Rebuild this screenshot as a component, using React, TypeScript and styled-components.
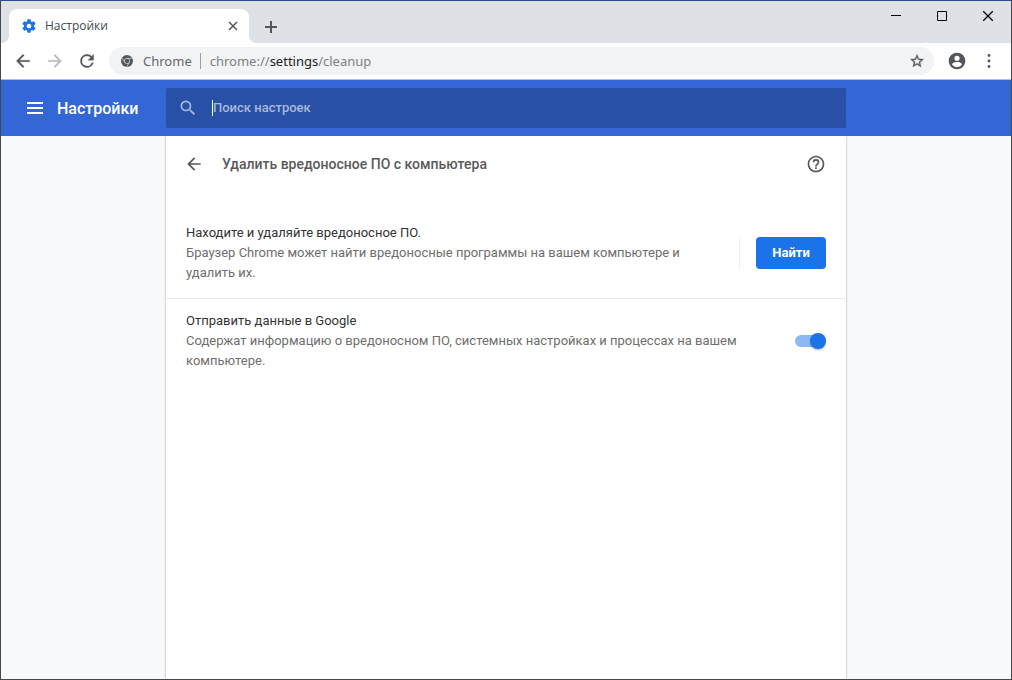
import React from "react";
import styled, { createGlobalStyle } from "styled-components";

const GlobalStyle = createGlobalStyle`
  *, *::before, *::after { box-sizing: border-box; }
  body { margin: 0; background: #f8f9fb; }
  button, input { font: inherit; margin: 0; }
`;

const Window = styled.div`
  min-height: 100vh;
  display: flex;
  flex-direction: column;
  border: 1px solid #46484d;
  border-top-color: #2c4a8c;
  font: 13px/20px Roboto, sans-serif;
  color: #333;
`;

const TabStrip = styled.div`
  display: flex;
  height: 42px;
  padding-left: 8px;
  background: #dee1e6;
  font: 12px/16px "Open Sans", sans-serif;
`;

const Tab = styled.div`
  position: relative;
  align-self: flex-end;
  display: flex;
  align-items: center;
  width: 240px;
  height: 34px;
  padding: 0 8px 0 12px;
  border-radius: 8px 8px 0 0;
  background: #fff;
  color: #45494d;

  &::before, &::after {
    content: "";
    position: absolute;
    bottom: 0;
    width: 8px;
    height: 8px;
  }
  &::before {
    right: 100%;
    background: radial-gradient(circle at 0 0, transparent 8px, #fff 8px);
  }
  &::after {
    left: 100%;
    background: radial-gradient(circle at 100% 0, transparent 8px, #fff 8px);
  }
`;

const TabTitle = styled.span`
  flex: 1;
  margin-left: 8px;
`;

const IconButton = styled.button<{ $w?: number; $h?: number; $color?: string }>`
  display: flex;
  flex: none;
  align-items: center;
  justify-content: center;
  width: ${(p) => p.$w ?? 32}px;
  height: ${(p) => p.$h ?? 32}px;
  padding: 0;
  border: 0;
  background: none;
  color: ${(p) => p.$color ?? "#54575b"};
`;

const NewTab = styled(IconButton)`
  align-self: flex-end;
  margin: 0 0 0 6px;
`;

const WindowButtons = styled.div`
  display: flex;
  margin-left: auto;
`;

const Toolbar = styled.div`
  display: flex;
  align-items: center;
  height: 37px;
  padding: 0 6px;
  border-bottom: 1px solid #b9bdc6;
  background: #fff;
`;

const Omnibox = styled.div`
  flex: 1;
  display: flex;
  align-items: center;
  height: 28px;
  margin: 0 7px 0 6px;
  padding: 0 1px 0 12px;
  border-radius: 14px;
  background: #f1f3f4;
  color: #64686c;
  font: 13px/20px "Noto Sans", sans-serif;
`;

const SiteLabel = styled.span`
  margin-left: 10px;
  padding-right: 8px;
`;

const Separator = styled.span`
  width: 1px;
  height: 16px;
  background: #9a9da1;
`;

const Address = styled.div`
  flex: 1;
  margin-left: 9px;
  color: #7c8186;
  outline: 0;

  b { font-weight: 400; color: #202124; }
`;

const Header = styled.header`
  display: grid;
  grid-template-columns: 1fr minmax(0, 680px) 1fr;
  align-items: center;
  height: 56px;
  background: #3367d6;
  color: #fff;
`;

const Brand = styled.div`
  display: flex;
  align-items: center;
  padding-left: 18px;
`;

const BrandName = styled.h1`
  margin: 0 0 0 6px;
  padding-top: 2px;
  font-size: 16px;
  line-height: 24px;
  font-weight: 500;
`;

const SearchBox = styled.label`
  display: flex;
  align-items: center;
  height: 40px;
  padding: 0 12px;
  border-radius: 2px;
  background: #2850a7;
  color: #a9b9dc;
`;

const Caret = styled.span`
  width: 1px;
  height: 16px;
  margin-left: 14px;
  background: #fff;
`;

const SearchInput = styled.input`
  flex: 1;
  min-width: 0;
  padding: 0;
  border: 0;
  outline: 0;
  background: none;
  color: #fff;
  font-weight: 500;

  &::placeholder { color: #a9b9dc; opacity: 1; }
`;

const Content = styled.main`
  flex: 1;
  display: grid;
  grid-template-columns: minmax(0, 680px);
  justify-content: center;
`;

const Card = styled.section`
  background: #fff;
  box-shadow: 0 0 2px rgba(60, 64, 67, 0.5);
  clip-path: inset(0 -4px);
`;

const CardHeader = styled.div`
  display: flex;
  align-items: center;
  height: 56px;
  padding: 0 14px 0 12px;
  margin-bottom: 18px;
`;

const CardTitle = styled.h2`
  flex: 1;
  margin: 0 0 0 12px;
  color: #5a5a5a;
  font-size: 14px;
  line-height: 20px;
  font-weight: 500;
`;

const Row = styled.div`
  display: flex;
  align-items: center;
  padding: 13px 20px 15px;

  & + & {
    padding-top: 12px;
    border-top: 1px solid #e8eaed;
  }
`;

const RowText = styled.div`
  flex: 1;
  margin-right: 52px;
`;

const RowTitle = styled.div`
  color: #333;
`;

const RowNote = styled.div`
  color: #6e6e6e;
`;

const ActionDivider = styled.span`
  width: 1px;
  height: 32px;
  margin-right: 16px;
  background: #eceef0;
`;

const PrimaryButton = styled.button`
  min-width: 70px;
  height: 32px;
  padding: 0 16px;
  border: 0;
  border-radius: 4px;
  background: #1a73e8;
  color: #fff;
  font-weight: 700;
`;

const Toggle = styled.input`
  appearance: none;
  display: grid;
  align-items: center;
  width: 31px;
  height: 16px;

  &::before, &::after {
    content: "";
    grid-area: 1 / 1;
  }
  &::before {
    width: 28px;
    height: 12px;
    border-radius: 6px;
    background: #8cb8f3;
  }
  &::after {
    justify-self: start;
    width: 16px;
    height: 16px;
    border-radius: 50%;
    background: #1a73e8;
    box-shadow: 0 1px 2px rgba(60, 64, 67, 0.4);
  }
  &:checked::after { justify-self: end; }
`;

const Glyph = ({ d, size = 24, bold = 0 }: { d: string; size?: number; bold?: number }) => (
  <svg
    width={size}
    height={size}
    viewBox="0 0 24 24"
    fill="currentColor"
    stroke="currentColor"
    strokeWidth={bold}
    aria-hidden="true"
  >
    <path d={d} />
  </svg>
);

const Lines = ({ d, size, width = 1 }: { d: string; size: number; width?: number }) => (
  <svg
    width={size}
    height={size}
    viewBox={`0 0 ${size} ${size}`}
    fill="none"
    stroke="currentColor"
    strokeWidth={width}
    aria-hidden="true"
  >
    <path d={d} />
  </svg>
);

const ICONS = {
  gear: "M19.43 12.98c.04-.32.07-.64.07-.98s-.03-.66-.07-.98l2.11-1.65c.19-.15.24-.42.12-.64l-2-3.46c-.12-.22-.39-.3-.61-.22l-2.49 1c-.52-.4-1.08-.73-1.69-.98l-.38-2.65C14.46 2.18 14.25 2 14 2h-4c-.25 0-.46.18-.49.42l-.38 2.65c-.61.25-1.17.59-1.69.98l-2.49-1c-.23-.09-.49 0-.61.22l-2 3.46c-.13.22-.07.49.12.64l2.11 1.65c-.04.32-.07.65-.07.98s.03.66.07.98l-2.11 1.65c-.19.15-.24.42-.12.64l2 3.46c.12.22.39.3.61.22l2.49-1c.52.4 1.08.73 1.69.98l.38 2.65c.03.24.24.42.49.42h4c.25 0 .46-.18.49-.42l.38-2.65c.61-.25 1.17-.59 1.69-.98l2.49 1c.23.09.49 0 .61-.22l2-3.46c.12-.22.07-.49-.12-.64l-2.11-1.65zM12 15.5c-1.93 0-3.5-1.57-3.5-3.5s1.57-3.5 3.5-3.5 3.5 1.57 3.5 3.5-1.57 3.5-3.5 3.5z",
  back: "M20 11H7.83l5.59-5.59L12 4l-8 8 8 8 1.41-1.41L7.83 13H20v-2z",
  forward: "M12 4l-1.41 1.41L16.17 11H4v2h12.17l-5.58 5.59L12 20l8-8z",
  reload: "M17.65 6.35A7.96 7.96 0 0 0 12 4a8 8 0 1 0 7.73 10h-2.08A6 6 0 1 1 12 6c1.66 0 3.14.69 4.22 1.78L13 11h7V4l-2.35 2.35z",
  star: "M22 9.24l-7.19-.62L12 2 9.19 8.63 2 9.24l5.46 4.73L5.82 21 12 17.27 18.18 21l-1.63-7.03L22 9.24zM12 15.4l-3.76 2.27 1-4.28-3.32-2.88 4.38-.38L12 6.1l1.71 4.04 4.38.38-3.32 2.88 1 4.28L12 15.4z",
  account: "M12 2a10 10 0 1 0 0 20 10 10 0 0 0 0-20zm0 3.6a3.1 3.1 0 1 1 0 6.2 3.1 3.1 0 0 1 0-6.2zM12 19.4a7.2 7.2 0 0 1-6-3.2c.03-2 4-3 6-3s5.97 1 6 3a7.2 7.2 0 0 1-6 3.2z",
  more: "M12 7.6a1.6 1.6 0 1 0 0-3.2 1.6 1.6 0 0 0 0 3.2zm0 2.8a1.6 1.6 0 1 0 0 3.2 1.6 1.6 0 0 0 0-3.2zm0 6a1.6 1.6 0 1 0 0 3.2 1.6 1.6 0 0 0 0-3.2z",
  search: "M15.5 14h-.79l-.28-.27A6.47 6.47 0 0 0 16 9.5 6.5 6.5 0 1 0 9.5 16c1.61 0 3.09-.59 4.23-1.57l.27.28v.79l5 4.99L20.49 19l-4.99-5zm-6 0C7.01 14 5 11.99 5 9.5S7.01 5 9.5 5 14 7.01 14 9.5 11.99 14 9.5 14z",
  help: "M11 18h2v-2h-2v2zm1-16C6.48 2 2 6.48 2 12s4.48 10 10 10 10-4.48 10-10S17.52 2 12 2zm0 18c-4.41 0-8-3.59-8-8s3.59-8 8-8 8 3.59 8 8-3.59 8-8 8zm0-14a4 4 0 0 0-4 4h2a2 2 0 1 1 4 0c0 2-3 1.75-3 5h2c0-2.25 3-2.5 3-5a4 4 0 0 0-4-4z",
};

const ChromeMark = () => (
  <svg width="12" height="12" viewBox="0 0 24 24" aria-hidden="true">
    <circle cx="12" cy="12" r="12" fill="#54585c" />
    <g stroke="#d5d8da" strokeWidth="1.4" fill="none">
      <circle cx="12" cy="12" r="5.4" />
      <path d="M12 6.6h11M7.3 14.7L2 5.6M16.7 14.7L11.4 24" />
    </g>
  </svg>
);

export default function App() {
  return (
    <Window>
      <GlobalStyle />
      <TabStrip>
        <Tab>
          <IconButton as="span" $w={16} $h={16} $color="#1a73e8">
            <Glyph d={ICONS.gear} size={16} />
          </IconButton>
          <TabTitle>Настройки</TabTitle>
          <IconButton $w={16} $h={16} aria-label="Закрыть вкладку">
            <Lines d="M1 1L9 9M9 1L1 9" size={10} width={1.5} />
          </IconButton>
        </Tab>
        <NewTab aria-label="Новая вкладка">
          <Lines d="M6 0V12M0 6H12" size={12} width={2} />
        </NewTab>
        <WindowButtons>
          <IconButton $w={46} $h={29} $color="#000" aria-label="Свернуть">
            <Lines d="M0 4.5H10" size={10} />
          </IconButton>
          <IconButton $w={46} $h={29} $color="#000" aria-label="Развернуть">
            <Lines d="M.5 .5H9.5V9.5H.5Z" size={10} />
          </IconButton>
          <IconButton $w={46} $h={29} $color="#000" aria-label="Закрыть">
            <Lines d="M0 0L10 10M10 0L0 10" size={10} width={1.3} />
          </IconButton>
        </WindowButtons>
      </TabStrip>

      <Toolbar>
        <IconButton aria-label="Назад">
          <Glyph d={ICONS.back} size={20} bold={0.3} />
        </IconButton>
        <IconButton $color="#babcbe" aria-label="Вперёд">
          <Glyph d={ICONS.forward} size={20} bold={0.3} />
        </IconButton>
        <IconButton aria-label="Обновить">
          <Glyph d={ICONS.reload} size={20} bold={0.3} />
        </IconButton>
        <Omnibox>
          <ChromeMark />
          <SiteLabel>Chrome</SiteLabel>
          <Separator />
          <Address role="textbox" aria-label="Адресная строка" tabIndex={0}>
            chrome://<b>settings</b>/cleanup
          </Address>
          <IconButton aria-label="Добавить в закладки">
            <Glyph d={ICONS.star} size={16} bold={0.5} />
          </IconButton>
        </Omnibox>
        <IconButton aria-label="Профиль">
          <Glyph d={ICONS.account} size={20} />
        </IconButton>
        <IconButton aria-label="Меню Chrome">
          <Glyph d={ICONS.more} size={22} />
        </IconButton>
      </Toolbar>

      <Header>
        <Brand>
          <IconButton $color="#fff" aria-label="Главное меню">
            <Lines d="M0 3H16M0 8H16M0 13H16" size={16} width={2} />
          </IconButton>
          <BrandName>Настройки</BrandName>
        </Brand>
        <SearchBox>
          <Glyph d={ICONS.search} size={20} />
          <Caret />
          <SearchInput type="text" placeholder="Поиск настроек" aria-label="Поиск настроек" />
        </SearchBox>
      </Header>

      <Content>
        <Card>
          <CardHeader>
            <IconButton aria-label="Назад">
              <Glyph d={ICONS.back} size={20} />
            </IconButton>
            <CardTitle>Удалить вредоносное ПО с компьютера</CardTitle>
            <IconButton aria-label="Справка">
              <Glyph d={ICONS.help} size={20} />
            </IconButton>
          </CardHeader>
          <Row>
            <RowText>
              <RowTitle>Находите и удаляйте вредоносное ПО.</RowTitle>
              <RowNote>
                Браузер Chrome может найти вредоносные программы на вашем компьютере и удалить их.
              </RowNote>
            </RowText>
            <ActionDivider />
            <PrimaryButton>Найти</PrimaryButton>
          </Row>
          <Row>
            <RowText as="label" htmlFor="report">
              <RowTitle>Отправить данные в Google</RowTitle>
              <RowNote>
                Содержат информацию о вредоносном ПО, системных настройках и процессах на вашем
                компьютере.
              </RowNote>
            </RowText>
            <Toggle id="report" type="checkbox" defaultChecked />
          </Row>
        </Card>
      </Content>
    </Window>
  );
}
